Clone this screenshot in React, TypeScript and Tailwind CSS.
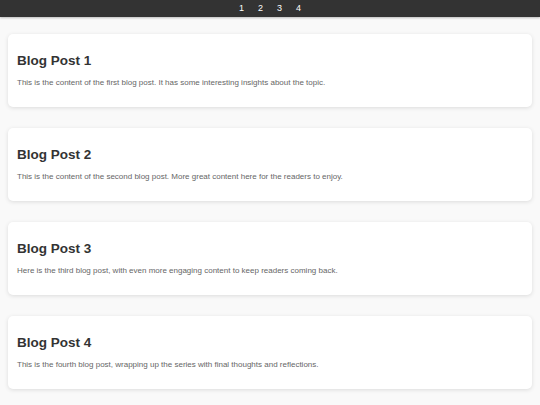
const posts = [
  {
    title: 'Blog Post 1',
    body: 'This is the content of the first blog post. It has some interesting insights about the topic.',
  },
  {
    title: 'Blog Post 2',
    body: 'This is the content of the second blog post. More great content here for the readers to enjoy.',
  },
  {
    title: 'Blog Post 3',
    body: 'Here is the third blog post, with even more engaging content to keep readers coming back.',
  },
  {
    title: 'Blog Post 4',
    body: 'This is the fourth blog post, wrapping up the series with final thoughts and reflections.',
  },
];

export default function App() {
  return (
    <div className="min-h-[405px] bg-[#f9f9f9] font-['Liberation_Sans',Arial,sans-serif]">
      <nav className="flex h-[17px] items-center justify-center gap-[14px] bg-[#333333] shadow-[0_1px_2px_rgba(0,0,0,0.25)]">
        {[1, 2, 3, 4].map((n) => (
          <a key={n} href={`#post-${n}`} className="text-[9px] leading-none text-white">
            {n}
          </a>
        ))}
      </nav>

      <main className="flex flex-col gap-[21px] px-[8px] pt-[17px]">
        {posts.map((post, i) => (
          <section
            key={post.title}
            id={`post-${i + 1}`}
            className="h-[73px] rounded-[5px] bg-white px-[9px] pt-[19px] shadow-[0_1px_4px_rgba(0,0,0,0.12)]"
          >
            <h2 className="text-[13.5px] leading-[16px] font-bold text-[#333333]">{post.title}</h2>
            <p className="mt-[9px] text-[8px] leading-[10px] text-[#666666]">{post.body}</p>
          </section>
        ))}
      </main>
    </div>
  );
}
